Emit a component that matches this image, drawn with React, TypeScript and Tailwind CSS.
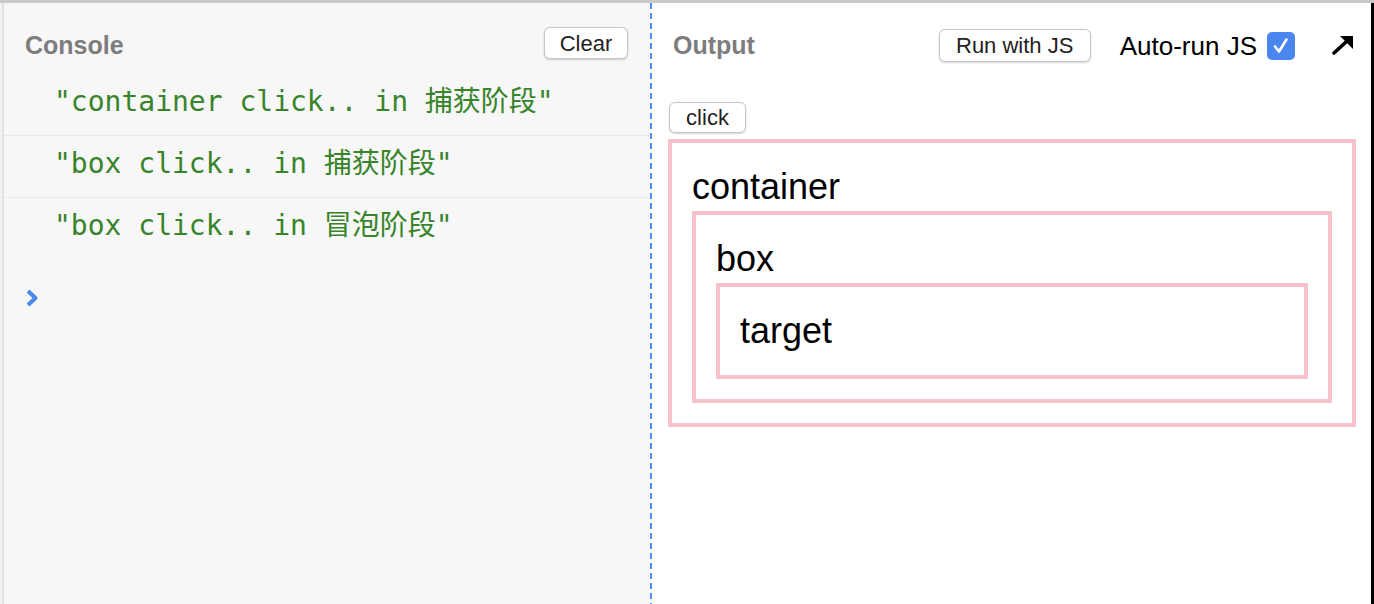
import React from "react";

const mono = { fontFamily: '"DejaVu Sans Mono", "Noto Sans CJK SC", monospace' };
const sans = { fontFamily: '"Liberation Sans", Arial, sans-serif' };

const logs = [
  '"container click.. in 捕获阶段"',
  '"box click.. in 捕获阶段"',
  '"box click.. in 冒泡阶段"',
];

function Btn({ children, className = "" }: { children: React.ReactNode; className?: string }) {
  return (
    <button
      className={`flex items-center justify-center rounded-[6px] border border-[#c6c6c6] bg-white text-[#222] shadow-[0_1px_2px_rgba(0,0,0,0.18)] ${className}`}
    >
      {children}
    </button>
  );
}

export default function App() {
  return (
    <div className="flex h-[604px] w-[1374px] flex-col overflow-hidden bg-white" style={sans}>
      <div className="h-[3px] w-full shrink-0 bg-[#c9c9c9]" />
      <div className="flex flex-1">
        {/* Console */}
        <div className="w-[2px] bg-[#f2f2f2]" />
        <div className="w-[2px] bg-[#e2e2e2]" />
        <div className="flex w-[646px] flex-col bg-[#f7f7f7]">
          <div className="flex h-[71px] items-start justify-between pl-[21px] pr-[22px] pt-[24px]">
            <span className="mt-[2px] text-[25px] font-bold leading-[32px] text-[#7d7d7d]">Console</span>
            <Btn className="h-[32px] w-[84px] text-[22px]">Clear</Btn>
          </div>
          {logs.map((l, i) => (
            <div
              key={i}
              className={`h-[62px] pl-[50px] pt-[12px] text-[28px] leading-[32px] text-[#38842a] ${i < 2 ? "border-b border-[#e9e9e9]" : ""}`}
              style={mono}
            >
              {l}
            </div>
          ))}
          <div className="pl-[20px] pt-[28px]">
            <svg width="16" height="20" viewBox="0 0 16 20">
              <path d="M4 3 L11.5 10 L4 17" fill="none" stroke="#4a86ec" strokeWidth="4" strokeLinejoin="round" />
            </svg>
          </div>
        </div>

        {/* divider */}
        <div className="w-[2px] bg-[repeating-linear-gradient(to_bottom,#4a8ef5_0px,#4a8ef5_6px,transparent_6px,transparent_10px)]" />

        {/* Output */}
        <div className="flex flex-1 flex-col">
          <div className="flex items-center pl-[21px] pr-[18px] pt-[26px]">
            <span className="mt-[-1px] text-[25px] font-bold leading-[32px] text-[#7d7d7d]">Output</span>
            <div className="flex-1" />
            <Btn className="h-[33px] w-[152px] text-[22px]">Run with JS</Btn>
            <span className="ml-[29px] text-[26px] leading-[32px] text-black">Auto-run JS</span>
            <span className="ml-[10px] flex h-[28px] w-[28px] items-center justify-center rounded-[5px] bg-[#4a86ee]">
              <svg width="20" height="20" viewBox="0 0 20 20">
                <path d="M4 10.5 L8 15.5 L15.5 3.5" fill="none" stroke="white" strokeWidth="2.6" strokeLinecap="round" strokeLinejoin="round" />
              </svg>
            </span>
            <svg className="ml-[37px]" width="21" height="19" viewBox="0 0 21 19">
              <polygon points="21,0 8,0 21,13" fill="black" />
              <path d="M2 17 L14 6" stroke="black" strokeWidth="3.6" strokeLinecap="round" />
            </svg>
          </div>
          <div className="pl-[17px] pt-[40px]">
            <Btn className="h-[31px] w-[77px] text-[22px]">click</Btn>
          </div>
          <div className="ml-[16px] mr-[15px] mt-[6px] border-4 border-[#f6c2cb] p-[20px] text-[36px] leading-[48px] text-black">
            <div>container</div>
            <div className="border-4 border-[#f6c2cb] p-[20px]">
              <div>box</div>
              <div className="border-4 border-[#f6c2cb] p-[20px]">
                <div>target</div>
              </div>
            </div>
          </div>
        </div>
        <div className="w-[3px] bg-black" />
      </div>
    </div>
  );
}
